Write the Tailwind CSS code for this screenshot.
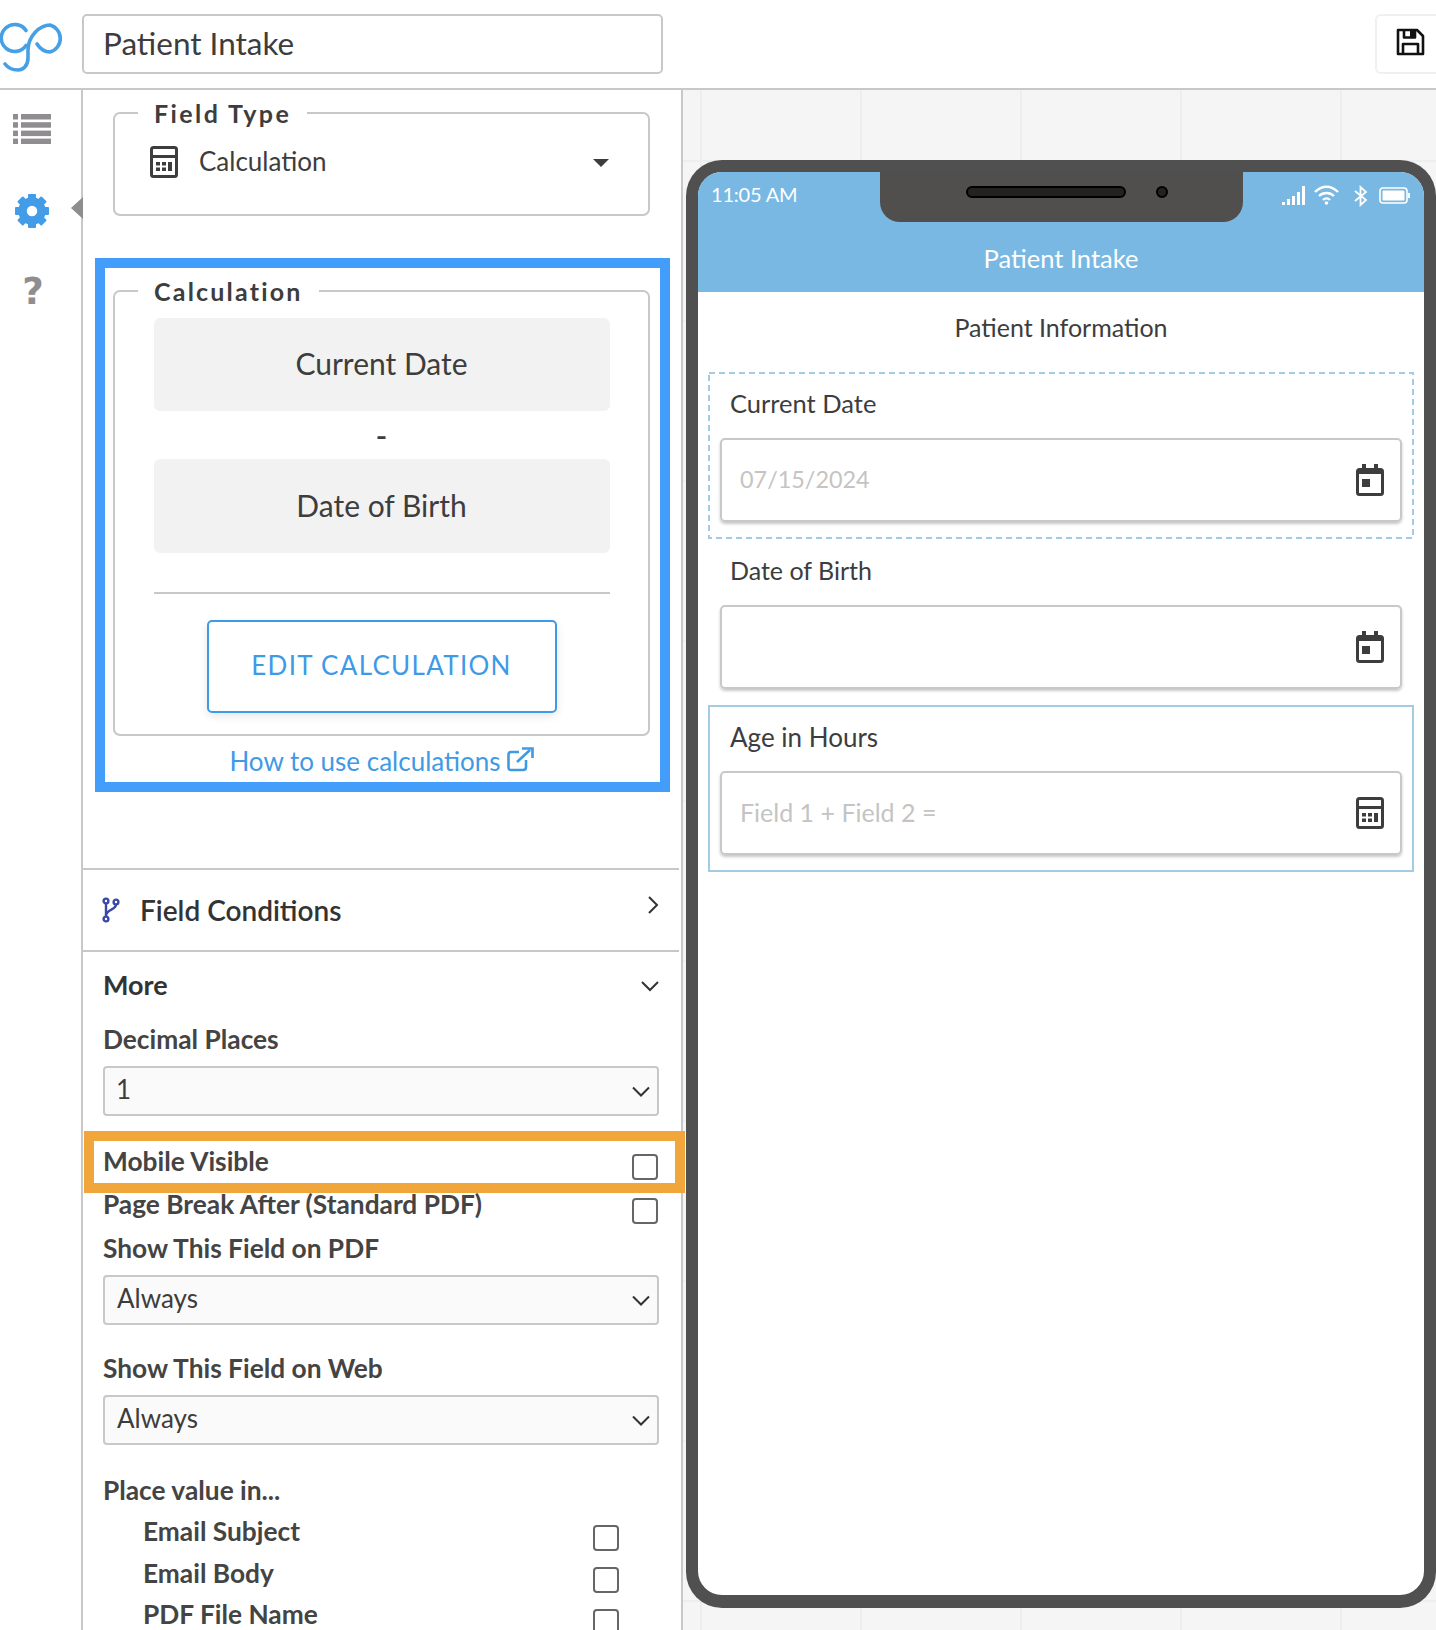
<!DOCTYPE html>
<html>
<head>
<meta charset="utf-8">
<script src="https://cdn.jsdelivr.net/npm/@tailwindcss/browser@4"></script>
<title>Patient Intake</title>
</head>
<body class="bg-white">
<div class="w-[1436px] h-[1630px] overflow-hidden flex flex-col font-['Lato','Liberation_Sans',sans-serif] text-[#3d3d3d]">

  <!-- top bar -->
  <header class="h-[90px] shrink-0 border-b-2 border-[#c8c8c8] flex items-start relative">
    <svg class="w-[66px] h-[56px] mt-[19px] ml-[0px] shrink-0" viewBox="0 19 66 56" fill="none" stroke="#45a0e6" stroke-width="3.6" stroke-linecap="round">
      <path d="M26 30.5A13.5 13.5 0 1 0 26 45.5"/>
      <path d="M37 44C41 50 46 52 50 52A14 14 0 0 0 50 25C40 25 28 36 28 50L28 58C28 66 23 70 18 70C13 70 8 68 5 64"/>
    </svg>
    <div class="ml-[16px] mt-[14px] w-[581px] h-[60px] border-2 border-[#c8c8c8] rounded-[5px] flex items-center pl-[19px] pb-[1px] text-[31.5px]">Patient Intake</div>
    <div class="absolute left-[1375px] top-[14px] w-[80px] h-[60px] border-2 border-[#f0f0f0] rounded-[6px] flex items-start pl-[18px] pt-[11px]">
      <svg class="w-[30px] h-[30px]" viewBox="0 0 30 30" fill="none" stroke="#111" stroke-width="2.6" stroke-linejoin="round">
        <path d="M3 3H22L28 9V27H3Z"/><path d="M8 27V17H23V27"/><path d="M9 3V10.5H20V3" /><rect x="15" y="3" width="4" height="7" fill="#111" stroke="none"/>
      </svg>
    </div>
  </header>

  <div class="flex flex-1 min-h-0">
    <!-- icon rail -->
    <nav class="w-[83px] shrink-0 border-r-2 border-[#c8c8c8] relative">
      <svg class="absolute left-[13px] top-[24px] w-[38px] h-[30px]" viewBox="0 0 38 30" fill="#8f8d8f">
        <rect x="0" y="0" width="5" height="5.5"/><rect x="8" y="0" width="30" height="5.5"/>
        <rect x="0" y="8.2" width="5" height="5.5"/><rect x="8" y="8.2" width="30" height="5.5"/>
        <rect x="0" y="16.6" width="5" height="5.5"/><rect x="8" y="16.6" width="30" height="5.5"/>
        <rect x="0" y="24.6" width="5" height="5.5"/><rect x="8" y="24.6" width="30" height="5.5"/>
      </svg>
      <svg class="absolute left-[15px] top-[104px] w-[34px] h-[34px]" viewBox="0 0 34 34" fill="#429ce8">
        <circle cx="17" cy="17" r="9.5" fill="none" stroke="#429ce8" stroke-width="8.5"/>
        <rect x="13" y="0" width="8" height="7" rx="1"/>
        <rect x="13" y="0" width="8" height="7" rx="1" transform="rotate(45 17 17)"/>
        <rect x="13" y="0" width="8" height="7" rx="1" transform="rotate(90 17 17)"/>
        <rect x="13" y="0" width="8" height="7" rx="1" transform="rotate(135 17 17)"/>
        <rect x="13" y="0" width="8" height="7" rx="1" transform="rotate(180 17 17)"/>
        <rect x="13" y="0" width="8" height="7" rx="1" transform="rotate(225 17 17)"/>
        <rect x="13" y="0" width="8" height="7" rx="1" transform="rotate(270 17 17)"/>
        <rect x="13" y="0" width="8" height="7" rx="1" transform="rotate(315 17 17)"/>
      </svg>
      <div class="absolute left-[71px] top-[107px] w-0 h-0 border-y-[11px] border-y-transparent border-r-[12px] border-r-[#8f8d8f]"></div>
      <div class="absolute left-[20px] top-[178px] w-[26px] text-center text-[37px] leading-[48px] font-bold font-['DejaVu_Sans',sans-serif] text-[#8f8d8f]">?</div>
    </nav>

    <!-- settings panel -->
    <aside class="w-[600px] shrink-0 border-r-2 border-[#c8c8c8] relative overflow-hidden">
      <fieldset class="mt-[8px] ml-[30px] w-[537px] h-[118px] border-2 border-[#c8c8c8] rounded-[7px]">
        <legend class="ml-[23px] px-[16px] text-[25px] leading-[30px] font-bold tracking-[2.4px]">Field Type</legend>
        <div class="flex items-center pl-[35px] pt-[14px] text-[26px]">
          <svg class="w-[28px] h-[32px] shrink-0" viewBox="0 0 28 32" fill="#3d3d3d">
            <rect x="1.5" y="1.5" width="25" height="29" rx="2" fill="none" stroke="#3d3d3d" stroke-width="3"/>
            <rect x="2" y="9" width="24" height="3"/>
            <rect x="6" y="16" width="4" height="3.5"/><rect x="12" y="16" width="4" height="3.5"/><rect x="18" y="16" width="4" height="9"/>
            <rect x="6" y="21.5" width="4" height="3.5"/><rect x="12" y="21.5" width="4" height="3.5"/>
          </svg>
          <span class="ml-[21px]">Calculation</span>
          <span class="ml-auto mr-[39px] w-0 h-0 mt-[3px] border-x-[8px] border-x-transparent border-t-[8px] border-t-[#3d3d3d]"></span>
        </div>
      </fieldset>

      <section class="ml-[12px] mt-[42px] w-[575px] h-[534px] border-[10px] border-[#429efa]">
        <fieldset class="mt-[8px] ml-[8px] w-[537px] h-[460px] border-2 border-[#c8c8c8] rounded-[7px] flex flex-col items-center">
          <legend class="ml-[23px] px-[16px] text-[25px] leading-[30px] font-bold tracking-[2.2px]">Calculation</legend>
          <div class="mt-[12px] mx-auto w-[456px] h-[93px] bg-[#f2f2f2] rounded-[6px] flex items-center justify-center pb-[2px] text-[30px]">Current Date</div>
          <div class="h-[48px] text-center text-[32px] leading-[50px] font-medium">-</div>
          <div class="mx-auto w-[456px] h-[94px] bg-[#f2f2f2] rounded-[6px] flex items-center justify-center pb-[2px] text-[30px]">Date of Birth</div>
          <div class="mx-auto w-[456px] mt-[39px] border-t-2 border-[#c8c8c8]"></div>
          <button class="block mx-auto mt-[26px] w-[350px] h-[93px] border-2 border-[#3f9ae6] rounded-[5px] bg-white text-[#3f9ae6] text-[26px] tracking-[1.3px] pb-[2px] shadow-[0_3px_8px_rgba(0,0,0,0.1)]">EDIT CALCULATION</button>
        </fieldset>
        <div class="flex items-start justify-center mt-[11px] pr-[2px] text-[#3f9ae6] text-[26px] leading-[28px]">
          <span>How to use calculations</span>
          <svg class="ml-[6px] w-[27px] h-[25px]" viewBox="0 0 27 25" fill="none" stroke="#3f9ae6" stroke-width="2.6">
            <path d="M19 13V20C19 22 18 23 16 23H4C2 23 1.5 22 1.5 20V8C1.5 6 2 5 4 5H12"/>
            <path d="M10 15L23 3"/><path d="M15 1.5H25.5V11" stroke-width="2.6"/>
          </svg>
        </div>
      </section>

      <div class="mt-[76px] mr-[2px] border-t-2 border-[#c8c8c8] h-[82px] flex items-center pl-[18px] relative">
        <svg class="w-[20px] h-[26px] shrink-0" viewBox="0 0 20 26" fill="none" stroke="#3949a8" stroke-width="2.4">
          <circle cx="5" cy="4" r="2.4"/><circle cx="5" cy="22" r="2.4"/><circle cx="15" cy="5" r="2.4"/>
          <path d="M5 6.5V19.5"/><path d="M15 7.500C15 13 6 12 5 18"/>
        </svg>
        <span class="ml-[19px] text-[28px] leading-[36px] font-semibold text-[#333]">Field Conditions</span>
        <svg class="absolute left-[564px] top-[26px] w-[12px] h-[18px]" viewBox="0 0 12 18" fill="none" stroke="#333" stroke-width="2"><path d="M2 1L10 9L2 17"/></svg>
      </div>

      <div class="mr-[2px] border-t-2 border-[#c8c8c8] px-[20px] relative">
        <div class="h-[66px] flex items-center text-[27px] font-bold text-[#333]">More</div>
        <svg class="absolute left-[558px] top-[28px] w-[18px] h-[12px]" viewBox="0 0 18 12" fill="none" stroke="#333" stroke-width="2"><path d="M1 2L9 10L17 2"/></svg>

        <div class="mt-[5px] text-[26.3px] leading-[32px] font-bold text-[#444]">Decimal Places</div>
        <div class="mt-[11px] w-[556px] h-[50px] border-2 border-[#c8c8c8] rounded-[4px] bg-[#fafafa] flex items-center justify-between pl-[11px] pr-[7px] pb-[4px] text-[26px]">
          <span>1</span>
          <svg class="w-[18px] h-[11px] mt-[4px]" viewBox="0 0 18 11" fill="none" stroke="#333" stroke-width="2"><path d="M1 1.5L9 9.5L17 1.5"/></svg>
        </div>

        <div class="mt-[26px] h-[44px] flex items-start justify-between text-[26.3px] leading-[32px] font-bold text-[#444]">
          <span class="mt-[3px]">Mobile Visible</span>
          <input type="checkbox" class="appearance-none block mt-[12px] mr-[1px] w-[26px] h-[26px] border-2 border-[#666] rounded-[4px] bg-white">
        </div>
        <div class="h-[44px] flex items-start justify-between text-[26.3px] leading-[32px] font-bold text-[#444]">
          <span class="mt-[2px]">Page Break After (Standard PDF)</span>
          <input type="checkbox" class="appearance-none block mt-[12px] mr-[1px] w-[26px] h-[26px] border-2 border-[#666] rounded-[4px] bg-white">
        </div>

        <div class="mt-[2px] text-[26.3px] leading-[32px] font-bold text-[#444]">Show This Field on PDF</div>
        <div class="mt-[11px] w-[556px] h-[50px] border-2 border-[#c8c8c8] rounded-[4px] bg-[#fafafa] flex items-center justify-between pl-[12px] pr-[7px] pb-[4px] text-[26px]">
          <span>Always</span>
          <svg class="w-[18px] h-[11px] mt-[4px]" viewBox="0 0 18 11" fill="none" stroke="#333" stroke-width="2"><path d="M1 1.5L9 9.5L17 1.5"/></svg>
        </div>

        <div class="mt-[27px] text-[26.3px] leading-[32px] font-bold text-[#444]">Show This Field on Web</div>
        <div class="mt-[11px] w-[556px] h-[50px] border-2 border-[#c8c8c8] rounded-[4px] bg-[#fafafa] flex items-center justify-between pl-[12px] pr-[7px] pb-[4px] text-[26px]">
          <span>Always</span>
          <svg class="w-[18px] h-[11px] mt-[4px]" viewBox="0 0 18 11" fill="none" stroke="#333" stroke-width="2"><path d="M1 1.5L9 9.5L17 1.5"/></svg>
        </div>

        <div class="mt-[29px] text-[26.3px] leading-[32px] font-bold text-[#444]">Place value in...</div>
        <div class="pl-[40px] pr-[40px]">
          <div class="mt-[9px] h-[42px] flex items-start justify-between text-[26.3px] leading-[32px] font-bold text-[#444]">
            <span>Email Subject</span>
            <input type="checkbox" class="appearance-none block mt-[10px] w-[26px] h-[26px] border-2 border-[#666] rounded-[4px] bg-white">
          </div>
          <div class="h-[42px] flex items-start justify-between text-[26.3px] leading-[32px] font-bold text-[#444]">
            <span>Email Body</span>
            <input type="checkbox" class="appearance-none block mt-[10px] w-[26px] h-[26px] border-2 border-[#666] rounded-[4px] bg-white">
          </div>
          <div class="h-[42px] flex items-start justify-between text-[26.3px] leading-[26px] font-bold text-[#444]">
            <span class="mt-[2px]">PDF File Name</span>
            <input type="checkbox" class="appearance-none block mt-[10px] w-[26px] h-[26px] border-2 border-[#666] rounded-[4px] bg-white">
          </div>
        </div>
      </div>
    </aside>

    <!-- canvas -->
    <main class="flex-1 relative overflow-hidden bg-[#f5f5f5] bg-[linear-gradient(90deg,transparent_17px,#eeeeee_17px,#eeeeee_19px,transparent_19px),linear-gradient(180deg,transparent_70px,#eeeeee_70px,#eeeeee_72px,transparent_72px)] bg-size-[160px_160px] pt-[70px] pl-[3px]">
      <div class="w-[750px] h-[1448px] bg-[#505050] rounded-[36px] p-[12px] relative">
        <div class="h-[1423px] bg-white rounded-[24px] overflow-hidden relative">
          <div class="h-[120px] bg-[#78b8e2] text-white relative">
            <div class="absolute left-[13px] top-[6px] text-[20px] tracking-[-0.2px] leading-[32px]">11:05 AM</div>
            <div class="absolute left-[182px] top-0 w-[363px] h-[50px] bg-[#504f4e] rounded-b-[20px]">
              <div class="absolute left-[86px] top-[14px] w-[160px] h-[12px] bg-[#222] border-2 border-black rounded-full"></div>
              <div class="absolute left-[276px] top-[14px] w-[12px] h-[12px] bg-[#222] border-2 border-black rounded-full"></div>
            </div>
            <svg class="absolute left-[584px] top-[12px] w-[130px] h-[24px]" viewBox="0 0 130 24" fill="#fff">
              <rect x="0" y="18" width="3" height="3"/><rect x="5" y="15" width="3" height="6"/><rect x="10" y="12" width="3" height="9"/><rect x="15" y="8" width="3" height="13" /><rect x="20" y="2" width="3" height="19"/>
              <g fill="none" stroke="#fff" stroke-width="2.4"><path d="M33 8C40 1 49 1 56 8"/><path d="M37 12C41 8 48 8 52 12"/><path d="M41 16C43 14 46 14 48 16"/></g>
              <circle cx="44.500" cy="19" r="1.8"/>
              <path d="M73 7L84 16L78.500 21V3L84 8L73 17" fill="none" stroke="#fff" stroke-width="1.8"/>
              <rect x="98" y="4" width="27" height="15" rx="3" fill="none" stroke="#fff" stroke-width="1.6"/><rect x="100.500" y="6.500" width="22" height="10" rx="1"/><rect x="126" y="9" width="2" height="5"/>
            </svg>
            <div class="absolute left-0 right-0 top-[67px] text-center text-[25.5px] leading-[38px]">Patient Intake</div>
          </div>
          <div class="h-[80px] flex items-center justify-center text-[25px] pb-[8px]">Patient Information</div>
          <div class="px-[10px]">
            <div class="h-[167px] px-[12px] pt-[2px] relative">
              <svg class="absolute inset-0 w-full h-full" fill="none" stroke="#a5cbe2" stroke-width="2"><rect x="1" y="1" width="704" height="165" stroke-dasharray="6 4"/></svg>
              <div class="h-[64px] pl-[10px] pt-[12px] text-[25.5px] leading-[34px]">Current Date</div>
              <div class="h-[84px] border-2 border-[#c8c8c8] rounded-[5px] shadow-[0_2px_3px_rgba(0,0,0,0.22)] flex items-center justify-between pl-[18px] pr-[16px] text-[23.4px] text-[#c4c4c4]">
                <span>07/15/2024</span>
                <svg class="w-[28px] h-[32px]" viewBox="0 0 28 32" fill="#3d3d3d"><rect x="1.500" y="5.500" width="25" height="25" rx="2" fill="none" stroke="#3d3d3d" stroke-width="3"/><rect x="6" y="0" width="4" height="6"/><rect x="18" y="0" width="4" height="6"/><rect x="2" y="5" width="24" height="5"/><rect x="6" y="15" width="8" height="8"/></svg>
              </div>
            </div>
            <div class="h-[166px] border-2 border-transparent px-[10px]">
              <div class="h-[64px] pl-[10px] pt-[12px] text-[25px] leading-[34px]">Date of Birth</div>
              <div class="h-[84px] border-2 border-[#c8c8c8] rounded-[5px] shadow-[0_2px_3px_rgba(0,0,0,0.22)] flex items-center justify-end pr-[16px]">
                <svg class="w-[28px] h-[32px]" viewBox="0 0 28 32" fill="#3d3d3d"><rect x="1.500" y="5.500" width="25" height="25" rx="2" fill="none" stroke="#3d3d3d" stroke-width="3"/><rect x="6" y="0" width="4" height="6"/><rect x="18" y="0" width="4" height="6"/><rect x="2" y="5" width="24" height="5"/><rect x="6" y="15" width="8" height="8"/></svg>
              </div>
            </div>
            <div class="h-[167px] border-2 border-[#a5cbe2] px-[10px]">
              <div class="h-[64px] pl-[10px] pt-[13px] text-[26px] leading-[34px]">Age in Hours</div>
              <div class="h-[84px] border-2 border-[#c8c8c8] rounded-[5px] shadow-[0_2px_3px_rgba(0,0,0,0.22)] flex items-center justify-between pl-[18px] pr-[16px] text-[25px] text-[#c4c4c4]">
                <span>Field 1 + Field 2 =</span>
                <svg class="w-[28px] h-[32px]" viewBox="0 0 28 32" fill="#3d3d3d"><rect x="1.500" y="1.500" width="25" height="29" rx="2" fill="none" stroke="#3d3d3d" stroke-width="3"/><rect x="2" y="9" width="24" height="3"/><rect x="6" y="16" width="4" height="3.500"/><rect x="12" y="16" width="4" height="3.500"/><rect x="18" y="16" width="4" height="9"/><rect x="6" y="21.500" width="4" height="3.500"/><rect x="12" y="21.500" width="4" height="3.500"/></svg>
              </div>
            </div>
          </div>
        </div>
      </div>
    </main>
  </div>

  <!-- orange annotation over the Mobile Visible row -->
  <div class="absolute left-[84px] top-[1131px] w-[601px] h-[62px] border-[10px] border-[#f1a63c] pointer-events-none"></div>
</div>
</body>
</html>
